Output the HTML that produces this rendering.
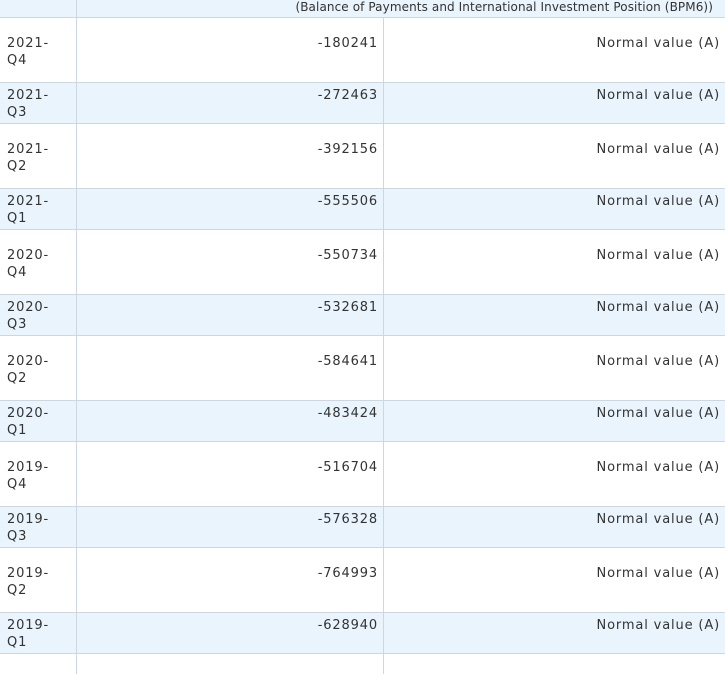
<!DOCTYPE html>
<html><head><meta charset="utf-8"><style>
body{margin:0;width:725px;height:661px;overflow:hidden;background:#fff;font-family:"DejaVu Sans",Verdana,sans-serif;font-size:13px;color:#333;}
.r{position:absolute;left:0;width:725px;box-sizing:border-box;border-bottom:1px solid #cdd7e0;}
.b{background:#e9f4fd;}
.c{position:absolute;top:0;bottom:0;line-height:17px;letter-spacing:0.85px;}
.c1{left:0;width:77px;border-right:1px solid #cdd7e0;padding-left:7px;box-sizing:border-box;}
.c2{left:77px;width:307px;border-right:1px solid #cdd7e0;text-align:right;padding-right:5px;box-sizing:border-box;}
.c3{left:384px;width:341px;text-align:right;padding-right:5px;box-sizing:border-box;}
.w .c{padding-top:17px}
.b .c{padding-top:4px}
</style></head><body>
<div class="r b" style="top:0;height:18px"><div class="c c1" style="padding-top:0"></div><div class="c" style="left:77px;width:648px;text-align:right;padding-right:12px;box-sizing:border-box;padding-top:0;line-height:14px;font-size:12px;letter-spacing:0.1px">(Balance of Payments and International Investment Position (BPM6))</div></div>
<div class="r w" style="top:18px;height:65px"><div class="c c1">2021-<br>Q4</div><div class="c c2">-180241</div><div class="c c3">Normal value (A)</div></div>
<div class="r b" style="top:83px;height:41px"><div class="c c1">2021-<br>Q3</div><div class="c c2">-272463</div><div class="c c3">Normal value (A)</div></div>
<div class="r w" style="top:124px;height:65px"><div class="c c1">2021-<br>Q2</div><div class="c c2">-392156</div><div class="c c3">Normal value (A)</div></div>
<div class="r b" style="top:189px;height:41px"><div class="c c1">2021-<br>Q1</div><div class="c c2">-555506</div><div class="c c3">Normal value (A)</div></div>
<div class="r w" style="top:230px;height:65px"><div class="c c1">2020-<br>Q4</div><div class="c c2">-550734</div><div class="c c3">Normal value (A)</div></div>
<div class="r b" style="top:295px;height:41px"><div class="c c1">2020-<br>Q3</div><div class="c c2">-532681</div><div class="c c3">Normal value (A)</div></div>
<div class="r w" style="top:336px;height:65px"><div class="c c1">2020-<br>Q2</div><div class="c c2">-584641</div><div class="c c3">Normal value (A)</div></div>
<div class="r b" style="top:401px;height:41px"><div class="c c1">2020-<br>Q1</div><div class="c c2">-483424</div><div class="c c3">Normal value (A)</div></div>
<div class="r w" style="top:442px;height:65px"><div class="c c1">2019-<br>Q4</div><div class="c c2">-516704</div><div class="c c3">Normal value (A)</div></div>
<div class="r b" style="top:507px;height:41px"><div class="c c1">2019-<br>Q3</div><div class="c c2">-576328</div><div class="c c3">Normal value (A)</div></div>
<div class="r w" style="top:548px;height:65px"><div class="c c1">2019-<br>Q2</div><div class="c c2">-764993</div><div class="c c3">Normal value (A)</div></div>
<div class="r b" style="top:613px;height:41px"><div class="c c1">2019-<br>Q1</div><div class="c c2">-628940</div><div class="c c3">Normal value (A)</div></div>
<div class="r w" style="top:654px;height:20px;border:0"><div class="c c1"></div><div class="c c2"></div></div>
</body></html>
